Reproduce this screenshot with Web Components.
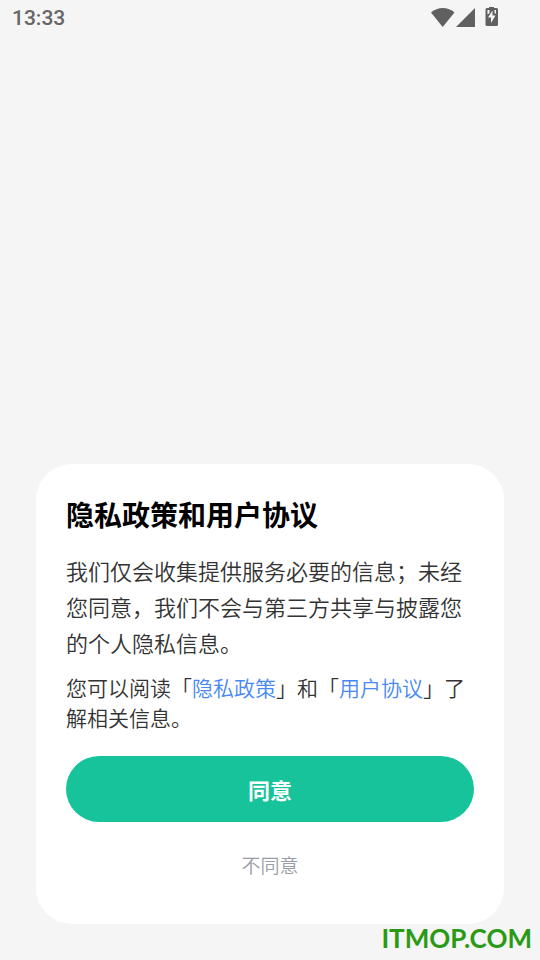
<!DOCTYPE html>
<html lang="zh-CN">
<head>
<meta charset="utf-8">
<meta name="viewport" content="width=device-width, initial-scale=1">
<title>隐私政策和用户协议</title>
<style>
  html, body { margin: 0; }
  body {
    background: #f5f5f5;
    font-family: "Noto Sans CJK SC", sans-serif;
  }
</style>
</head>
<body>
<consent-screen>
  <status-bar slot="status" time="13:33"></status-bar>
  <consent-card heading="隐私政策和用户协议">
    <policy-text>我们仅会收集提供服务必要的信息；未经您同意，我们不会与第三方共享与披露您的个人隐私信息。</policy-text>
    <policy-text compact>您可以阅读「<policy-link to="#privacy">隐私政策</policy-link>」和「<policy-link to="#terms">用户协议</policy-link>」了解相关信息。</policy-text>
    <action-button slot="actions" kind="primary">同意</action-button>
    <action-button slot="actions" kind="plain">不同意</action-button>
  </consent-card>
  <site-mark slot="mark">ITMOP.COM</site-mark>
</consent-screen>

<script>
  function define(name, render) {
    customElements.define(name, class extends HTMLElement {
      constructor() {
        super();
        this.attachShadow({ mode: "open" });
      }
      connectedCallback() {
        this.shadowRoot.innerHTML = render(this).trim();
      }
    });
  }

  define("consent-screen", () => `
    <style>
      :host {
        display: flex; flex-direction: column; justify-content: space-between;
        position: relative; box-sizing: border-box;
        min-height: 100vh; padding-bottom: 36px;
      }
      main { padding: 0 36px; }
      ::slotted([slot="mark"]) { position: absolute; right: 8px; bottom: 6px; }
    </style>
    <slot name="status"></slot>
    <main><slot></slot></main>
    <slot name="mark"></slot>`);

  define("status-bar", el => `
    <style>
      :host {
        display: flex; align-items: center; justify-content: space-between;
        height: 36px; padding: 0 41px 0 12px; color: #666;
        font: 500 21px/36px Roboto, sans-serif;
      }
      .icons { display: flex; align-items: center; }
      svg { display: block; fill: #606060; }
    </style>
    <time>${el.getAttribute("time")}</time>
    <div class="icons">
      <svg width="70" height="36" viewBox="0 0 70 36" role="img" aria-label="Wi-Fi、信号、充电中">
        <path d="M2 12.500C8.500 6.500 19 6.500 25.500 12.500L13.700 27Z"/>
        <path d="M46 8V27H27Z"/>
        <path fill-rule="evenodd" d="M60 7h5v1h2.500q1.500 0 1.500 1.500v15q0 1.500-1.500 1.500h-9.500q-1.500 0-1.500-1.500v-15q0-1.500 1.500-1.500h2zM63.500 10.500l-4.500 7h3v5.500l4.500-7.500h-3zM58.500 10v4.500l2-1.500v-3zM65.500 10v3.500h1.500v-3.500z"/>
      </svg>
    </div>`);

  define("consent-card", el => `
    <style>
      :host {
        display: block; background: #fff; border-radius: 36px;
        padding: 29px 30px 38px;
      }
      h1 { margin: 0 0 17px; font-size: 28px; line-height: 42px; font-weight: 700; color: #000; }
      .copy { display: grid; gap: 12px; }
      .actions { display: grid; gap: 22px; margin-top: 24px; }
    </style>
    <section aria-labelledby="title">
      <h1 id="title">${el.getAttribute("heading")}</h1>
      <div class="copy"><slot></slot></div>
      <div class="actions"><slot name="actions"></slot></div>
    </section>`);

  define("policy-text", () => `
    <style>
      :host { display: block; color: #333; font-size: 22px; font-weight: 350; line-height: 36px; }
      :host([compact]) { font-size: 21px; line-height: 30px; }
      p { margin: 0; }
    </style>
    <p><slot></slot></p>`);

  define("policy-link", el => `<style>
      :host { display: inline; }
      a { color: #4788f5; text-decoration: none; }
    </style><a href="${el.getAttribute("to")}"><slot></slot></a>`);

  define("action-button", () => `
    <style>
      :host { display: block; }
      button {
        display: block; width: 100%; border: 0; margin: 0; padding: 0;
        background: none; color: #999da6; cursor: pointer;
        font-family: inherit; font-size: 19px; font-weight: 350; line-height: 42px;
      }
      :host([kind="primary"]) button {
        background: #16c39a; color: #fff; border-radius: 33px;
        font-size: 22px; font-weight: 700; line-height: 30px; padding: 18px;
      }
    </style>
    <button type="button"><slot></slot></button>`);

  define("site-mark", () => `
    <style>
      :host { display: block; color: #2a9a14; font: 700 26px/32px Lato, sans-serif; }
    </style>
    <slot></slot>`);
</script>
</body>
</html>
